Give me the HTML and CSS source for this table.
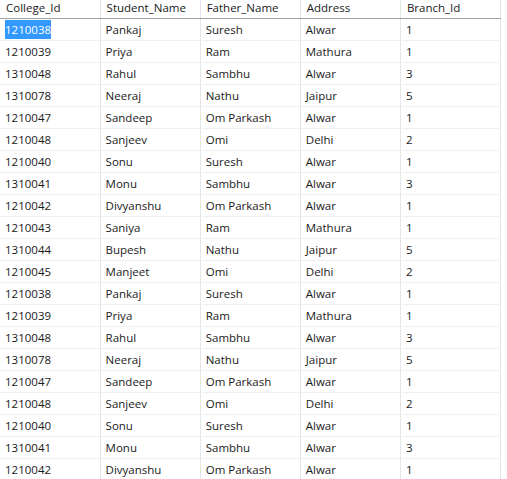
FILE: index.html
```html
<!DOCTYPE html>
<html>
<head>
<meta charset="utf-8">
<link rel="stylesheet" href="styles.css">
</head>
<body>
<div class="grid">
<table class="results">
<thead>
<tr><th>College_Id</th><th>Student_Name</th><th>Father_Name</th><th>Address</th><th>Branch_Id</th></tr>
</thead>
<tbody>
<tr><td><span class="sel">1210038</span></td><td>Pankaj</td><td>Suresh</td><td>Alwar</td><td>1</td></tr>
<tr><td>1210039</td><td>Priya</td><td>Ram</td><td>Mathura</td><td>1</td></tr>
<tr><td>1310048</td><td>Rahul</td><td>Sambhu</td><td>Alwar</td><td>3</td></tr>
<tr><td>1310078</td><td>Neeraj</td><td>Nathu</td><td>Jaipur</td><td>5</td></tr>
<tr><td>1210047</td><td>Sandeep</td><td>Om Parkash</td><td>Alwar</td><td>1</td></tr>
<tr><td>1210048</td><td>Sanjeev</td><td>Omi</td><td>Delhi</td><td>2</td></tr>
<tr><td>1210040</td><td>Sonu</td><td>Suresh</td><td>Alwar</td><td>1</td></tr>
<tr><td>1310041</td><td>Monu</td><td>Sambhu</td><td>Alwar</td><td>3</td></tr>
<tr><td>1210042</td><td>Divyanshu</td><td>Om Parkash</td><td>Alwar</td><td>1</td></tr>
<tr><td>1210043</td><td>Saniya</td><td>Ram</td><td>Mathura</td><td>1</td></tr>
<tr><td>1310044</td><td>Bupesh</td><td>Nathu</td><td>Jaipur</td><td>5</td></tr>
<tr><td>1210045</td><td>Manjeet</td><td>Omi</td><td>Delhi</td><td>2</td></tr>
<tr><td>1210038</td><td>Pankaj</td><td>Suresh</td><td>Alwar</td><td>1</td></tr>
<tr><td>1210039</td><td>Priya</td><td>Ram</td><td>Mathura</td><td>1</td></tr>
<tr><td>1310048</td><td>Rahul</td><td>Sambhu</td><td>Alwar</td><td>3</td></tr>
<tr><td>1310078</td><td>Neeraj</td><td>Nathu</td><td>Jaipur</td><td>5</td></tr>
<tr><td>1210047</td><td>Sandeep</td><td>Om Parkash</td><td>Alwar</td><td>1</td></tr>
<tr><td>1210048</td><td>Sanjeev</td><td>Omi</td><td>Delhi</td><td>2</td></tr>
<tr><td>1210040</td><td>Sonu</td><td>Suresh</td><td>Alwar</td><td>1</td></tr>
<tr><td>1310041</td><td>Monu</td><td>Sambhu</td><td>Alwar</td><td>3</td></tr>
<tr><td>1210042</td><td>Divyanshu</td><td>Om Parkash</td><td>Alwar</td><td>1</td></tr>
</tbody>
</table>
</div>
</body>
</html>
```
FILE: styles.css
```css
html, body {
  margin: 0;
  padding: 0;
  background: #ffffff;
  overflow: hidden;
}
.grid {
  width: 507px;
  height: 479px;
  overflow: hidden;
}
.results {
  border-collapse: collapse;
  table-layout: fixed;
  width: 501px;
  font-family: "Open Sans", "Noto Sans", sans-serif;
  font-size: 11.5px;
  color: #1a1a1a;
  border-right: 1px solid #e2e2e2;
}
.results th,
.results td {
  box-sizing: border-box;
  width: 100px;
}
.results th {
  height: 18px;
  padding: 0 0 0 6px;
  text-align: left;
  font-weight: normal;
  border-bottom: 1px solid #a0a0a0;
  border-right: 1px solid #e5e5e5;
  line-height: 16px;
  vertical-align: top;
}
.results td {
  height: 22px;
  padding: 0 0 0 5px;
  border-bottom: 1px solid #f0f0f0;
  border-right: 1px solid #e6e6e6;
  line-height: 21px;
  white-space: nowrap;
}
.sel {
  background: #3399ff;
  color: #ffffff;
  padding: 2px 0;
}
```
